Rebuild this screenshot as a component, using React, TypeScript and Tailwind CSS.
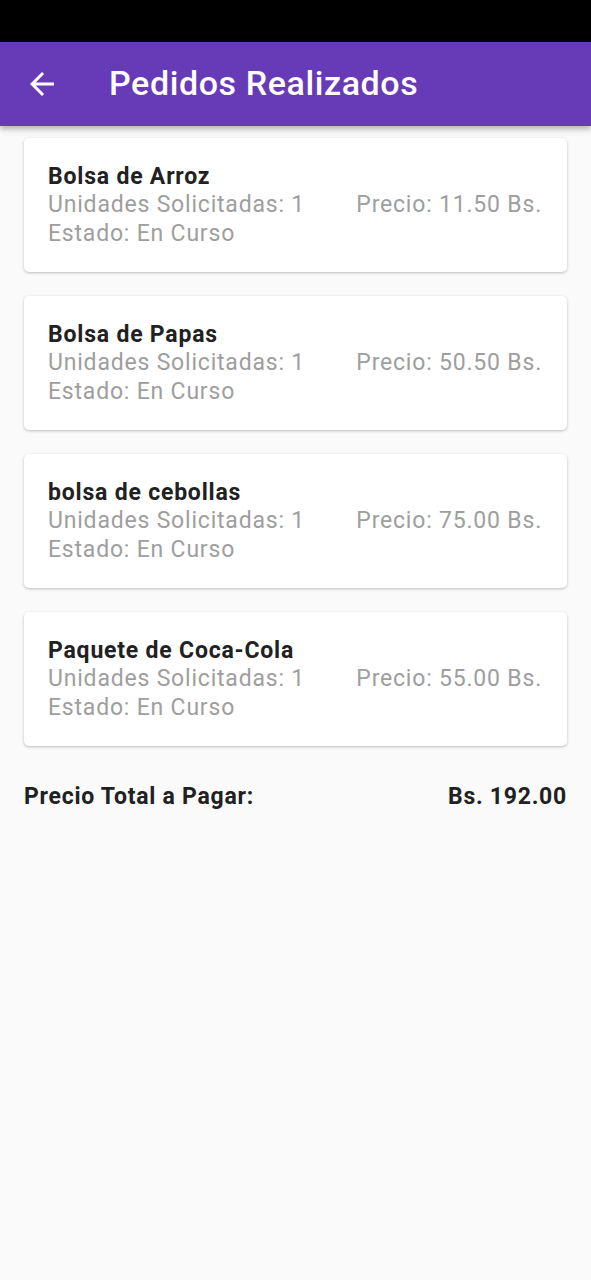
const pedidos = [
  { id: 1, nombre: "Bolsa de Arroz", unidades: 1, precio: "11.50" },
  { id: 2, nombre: "Bolsa de Papas", unidades: 1, precio: "50.50" },
  { id: 3, nombre: "bolsa de cebollas", unidades: 1, precio: "75.00" },
  { id: 4, nombre: "Paquete de Coca-Cola", unidades: 1, precio: "55.00" },
];

function BackArrow() {
  return (
    <svg viewBox="0 0 24 24" className="ml-[24px] size-[36px] fill-white">
      <path d="M20 11H7.83l5.59-5.59L12 4l-8 8 8 8 1.41-1.41L7.83 13H20v-2z" />
    </svg>
  );
}

export default function App() {
  return (
    <div
      className="min-h-[1280px] w-[591px] bg-[#fafafa]"
      style={{ fontFamily: "Roboto, 'Noto Sans', sans-serif" }}
    >
      <div className="h-[42px] bg-black" />
      <header className="relative z-10 flex h-[84px] items-center bg-[#673ab7] shadow-[0_3px_6px_rgba(0,0,0,0.3)]">
        <BackArrow />
        <h1 className="ml-[49px] pb-[2px] text-[34px] font-medium tracking-[0.6px] text-white">
          Pedidos Realizados
        </h1>
      </header>

      <main className="px-[24px] pt-[12px]">
        <div className="flex flex-col gap-[24px]">
          {pedidos.map((p) => (
            <section
              key={p.id}
              className="h-[134px] rounded-[5px] bg-white pl-[24px] pr-[25px] pt-[24px] tracking-[0.8px] shadow-[0_1px_3px_rgba(0,0,0,0.25)]"
            >
              <h2 className="text-[23px] leading-[29px] font-bold text-[#212121]">{p.nombre}</h2>
              <div className="flex justify-between text-[23px] leading-[28.5px] text-[#9e9e9e]">
                <span>Unidades Solicitadas: {p.unidades}</span>
                <span>Precio: {p.precio} Bs.</span>
              </div>
              <p className="text-[23px] leading-[28.5px] text-[#9e9e9e]">Estado: En Curso</p>
            </section>
          ))}
        </div>

        <div className="mt-[34px] flex justify-between text-[23px] font-bold tracking-[0.75px] text-[#212121]">
          <span>Precio Total a Pagar:</span>
          <span>Bs. 192.00</span>
        </div>
      </main>
    </div>
  );
}
